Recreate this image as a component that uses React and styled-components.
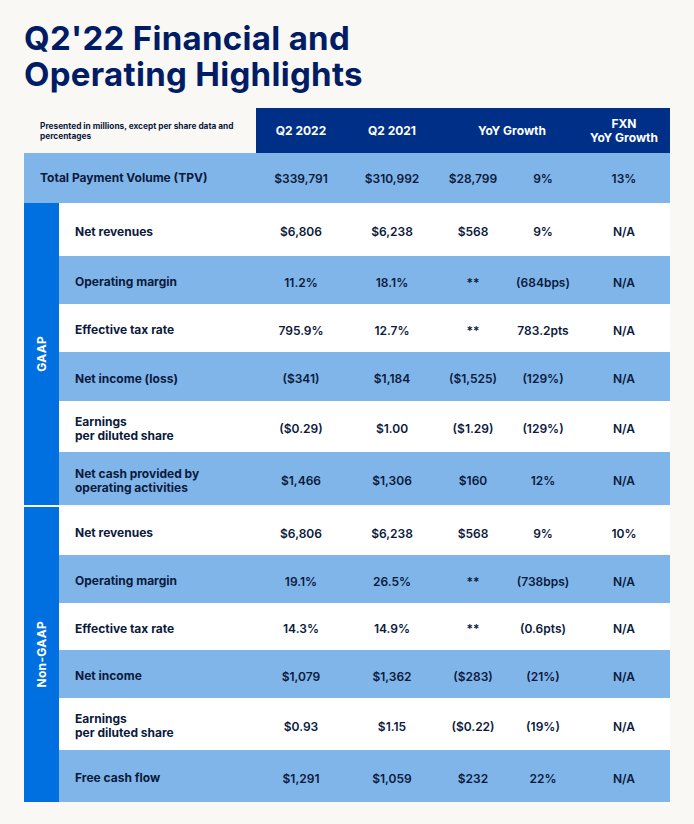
import React from 'react';
import styled, { createGlobalStyle } from 'styled-components';

const GlobalStyle = createGlobalStyle`
  body {
    margin: 0;
    background: #f9f8f5;
    font-family: Inter, "Liberation Sans", sans-serif;
  }
`;

const Page = styled.div`
  width: 694px;
  min-height: 824px;
  padding: 20px 24px 0 24px;
  box-sizing: border-box;
  background: #f9f8f5;
`;

const Title = styled.h1`
  margin: 0 0 16px 0;
  font-size: 33px;
  line-height: 36px;
  font-weight: 700;
  letter-spacing: 0.3px;
  color: #001c64;
`;

const Table = styled.div`
  width: 646px;
  display: flex;
  flex-direction: column;
  color: #0b1a3c;
`;

const COLS = '90px 92px 70px 70px 92px';

const HeaderRow = styled.div`
  display: grid;
  grid-template-columns: 232px 1fr;
  height: 45px;
`;

const Note = styled.div`
  padding: 0 4px 0 16px;
  align-self: center;
  font-size: 8.3px;
  line-height: 10px;
  font-weight: 700;
`;

const HeadBand = styled.div`
  display: grid;
  grid-template-columns: ${COLS};
  background: #002f87;
  color: #fff;
`;

const HeadCell = styled.div`
  display: flex;
  align-items: center;
  justify-content: center;
  text-align: center;
  font-size: 12px;
  line-height: 14px;
  font-weight: 700;
  grid-column: span ${(p) => p.$span || 1};
  padding-left: ${(p) => (p.$span ? 8 : 0)}px;
`;

const Row = styled.div`
  display: grid;
  grid-template-columns: ${(p) => p.$label}px ${COLS};
  height: ${(p) => p.$h}px;
  box-sizing: border-box;
  padding-top: ${(p) => (p.$inset ? 4 : 0)}px;
  background: ${(p) => (p.$blue ? '#80b5e9' : '#ffffff')};
  align-items: center;
`;

const Label = styled.div`
  padding-left: 16px;
  font-size: 12px;
  line-height: 14px;
  font-weight: 700;
  white-space: pre-line;
`;

const Value = styled.div`
  text-align: center;
  font-size: 12px;
  font-weight: 600;
  white-space: nowrap;
`;

const Section = styled.div`
  display: flex;
  margin-top: ${(p) => p.$gap || 0}px;
`;

const SideBar = styled.div`
  width: 35px;
  flex: none;
  background: #0070e0;
  display: flex;
  align-items: center;
  justify-content: center;
`;

const SideText = styled.span`
  writing-mode: vertical-rl;
  transform: rotate(180deg);
  color: #fff;
  font-size: 12px;
  font-weight: 700;
  letter-spacing: 0.3px;
`;

const Rows = styled.div`
  flex: 1;
  display: flex;
  flex-direction: column;
`;

const gaap = [
  { label: 'Net revenues', v: ['$6,806', '$6,238', '$568', '9%', 'N/A'], h: 53 },
  { label: 'Operating margin', v: ['11.2%', '18.1%', '**', '(684bps)', 'N/A'], h: 48 },
  { label: 'Effective tax rate', v: ['795.9%', '12.7%', '**', '783.2pts', 'N/A'], h: 48 },
  { label: 'Net income (loss)', v: ['($341)', '$1,184', '($1,525)', '(129%)', 'N/A'], h: 49 },
  { label: 'Earnings\nper diluted share', v: ['($0.29)', '$1.00', '($1.29)', '(129%)', 'N/A'], h: 51 },
  { label: 'Net cash provided by\noperating activities', v: ['$1,466', '$1,306', '$160', '12%', 'N/A'], h: 53 },
];

const nonGaap = [
  { label: 'Net revenues', v: ['$6,806', '$6,238', '$568', '9%', '10%'], h: 48 },
  { label: 'Operating margin', v: ['19.1%', '26.5%', '**', '(738bps)', 'N/A'], h: 48 },
  { label: 'Effective tax rate', v: ['14.3%', '14.9%', '**', '(0.6pts)', 'N/A'], h: 47 },
  { label: 'Net income', v: ['$1,079', '$1,362', '($283)', '(21%)', 'N/A'], h: 48 },
  { label: 'Earnings\nper diluted share', v: ['$0.93', '$1.15', '($0.22)', '(19%)', 'N/A'], h: 52 },
  { label: 'Free cash flow', v: ['$1,291', '$1,059', '$232', '22%', 'N/A'], h: 52 },
];

const DataRow = ({ row, blue, labelWidth, inset }) => (
  <Row $h={row.h} $blue={blue} $label={labelWidth} $inset={inset}>
    <Label>{row.label}</Label>
    {row.v.map((val, i) => (
      <Value key={i}>{val}</Value>
    ))}
  </Row>
);

const Group = ({ name, rows, gap }) => (
  <Section $gap={gap}>
    <SideBar>
      <SideText>{name}</SideText>
    </SideBar>
    <Rows>
      {rows.map((r, i) => (
        <DataRow key={r.label} row={r} blue={i % 2 === 1} labelWidth={197} inset />
      ))}
    </Rows>
  </Section>
);

const App = () => (
  <Page>
    <GlobalStyle />
    <Title>
      Q2'22 Financial and
      <br />
      Operating Highlights
    </Title>
    <Table>
      <HeaderRow>
        <Note>Presented in millions, except per share data and percentages</Note>
        <HeadBand>
          <HeadCell>Q2 2022</HeadCell>
          <HeadCell>Q2 2021</HeadCell>
          <HeadCell $span={2}>YoY Growth</HeadCell>
          <HeadCell>
            FXN
            <br />
            YoY Growth
          </HeadCell>
        </HeadBand>
      </HeaderRow>
      <DataRow
        row={{ label: 'Total Payment Volume (TPV)', v: ['$339,791', '$310,992', '$28,799', '9%', '13%'], h: 50 }}
        blue
        labelWidth={232}
      />
      <Group name="GAAP" rows={gaap} />
      <Group name="Non-GAAP" rows={nonGaap} gap={2} />
    </Table>
  </Page>
);

export default App;
